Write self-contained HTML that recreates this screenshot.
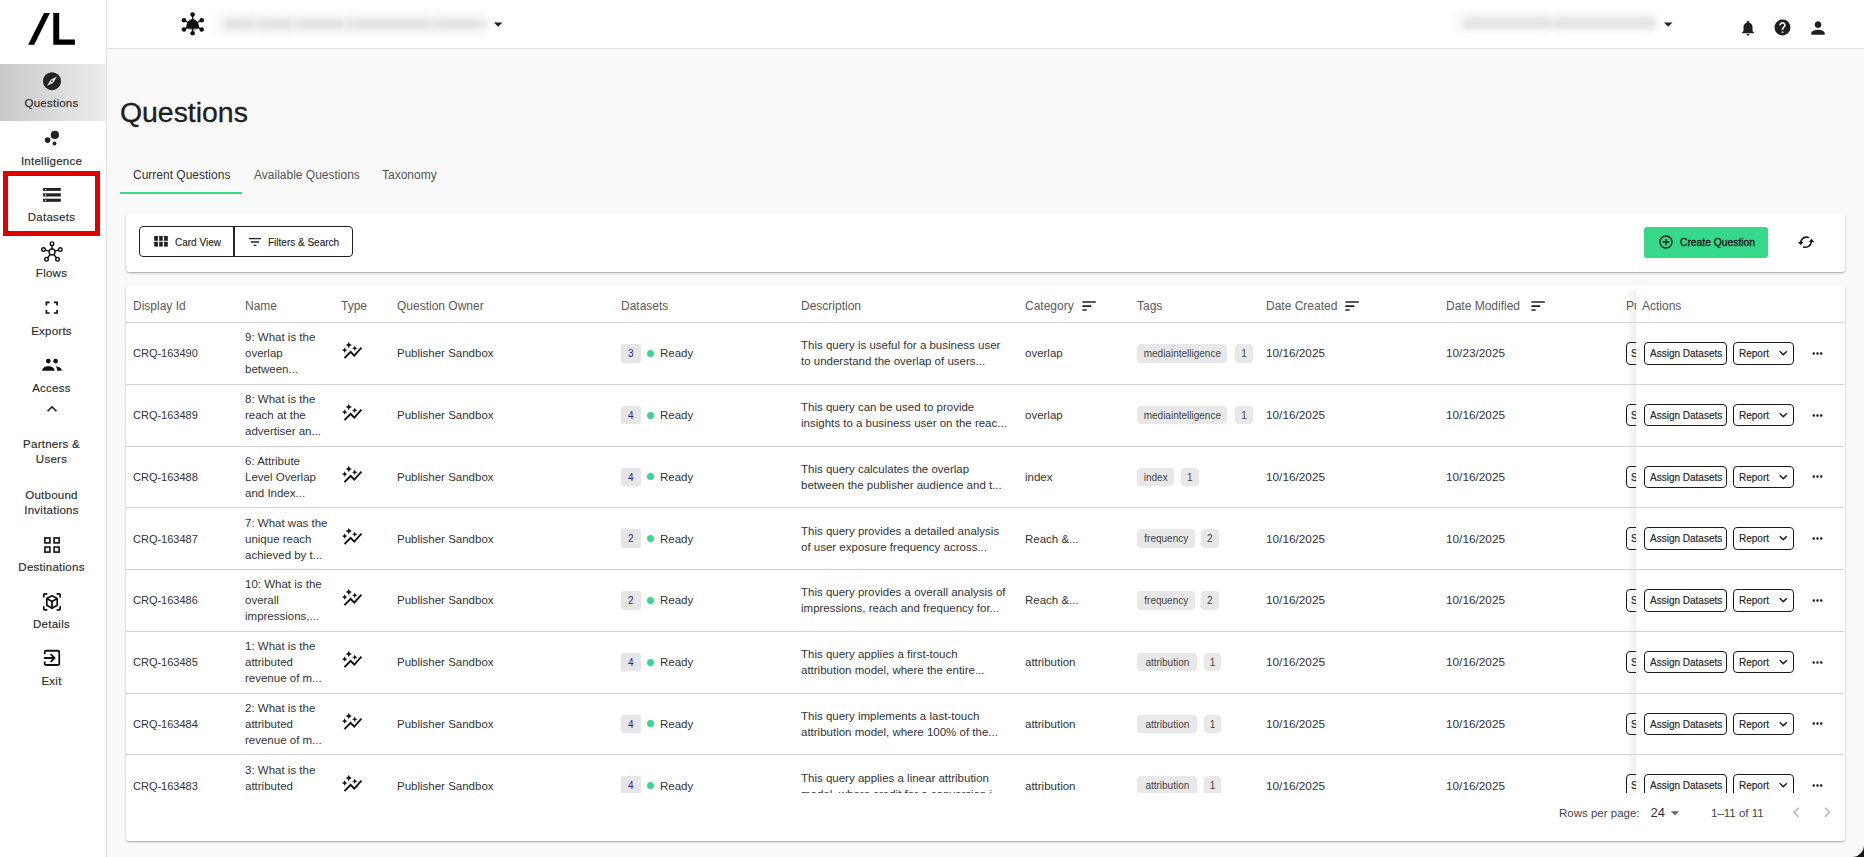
<!DOCTYPE html><html><head><meta charset="utf-8"><title>Questions</title><style>
*{box-sizing:border-box;margin:0;padding:0}
html,body{width:1864px;height:857px;overflow:hidden}
body{position:relative;background:#f9f9f9;font-family:"Liberation Sans",sans-serif;color:#222}
.abs{position:absolute}
#side{position:absolute;left:0;top:0;width:107px;height:857px;background:#fff;border-right:1px solid #e2e2e2}
.nav{position:absolute;left:0;width:103px;text-align:center;font-size:11.5px;letter-spacing:0.25px;color:#2a2a2a;line-height:15px;-webkit-text-stroke:0.15px #2a2a2a}
.nav svg{display:block;margin:0 auto}
#top{position:absolute;left:107px;top:0;width:1757px;height:49px;background:#fff;border-bottom:1px solid #dde2ea}
.t{position:absolute;white-space:nowrap}
.card{position:absolute;background:#fff;border-radius:3px}
.hdr{position:absolute;top:298px;font-size:12px;color:#5a5a5a;white-space:nowrap;line-height:16px}
.rowline{position:absolute;left:126px;width:1719px;height:1px;background:#d2d2d2}
.cell{position:absolute;white-space:nowrap;font-size:11.5px;color:#333;line-height:16px}
.badge{position:absolute;width:19.5px;height:18.5px;background:#e6e6e6;border-radius:3px;color:#2d1b99;font-size:10px;text-align:center;line-height:20px}
.dot{position:absolute;width:7px;height:7px;border-radius:50%;background:#36d98a}
.chip{position:absolute;height:18.5px;background:#e8e8e8;border-radius:4px;font-size:10px;color:#444;line-height:20.5px;padding:0 6px;white-space:nowrap}
.btn{position:absolute;height:22.5px;border:1.5px solid #1a1a1a;border-radius:4px;background:#fff;font-size:10px;color:#222;line-height:21.5px;white-space:nowrap;-webkit-text-stroke:0.15px #222}
</style></head><body>
<div id="side">
<svg class="abs" style="left:27px;top:12px" width="50" height="35" viewBox="0 0 50 35"><polygon points="1.1,32.8 7.2,32.8 22.9,0.9 17,0.9" fill="#000"/><polygon points="26.3,0.9 32.2,0.9 32.2,27.4 47.9,27.4 47.9,32.8 26.3,32.8" fill="#000"/></svg>
<div class="abs" style="left:0;top:64px;width:106px;height:56.5px;background:linear-gradient(90deg,#c9c9c9,#ececec)"></div>
<svg class="abs" style="left:36px;top:66px" width="32" height="32" viewBox="0 0 32 32"><circle cx="16" cy="15.2" r="9" fill="#222"/><path d="M21 10.4L17.4 16.7 11 20 14.6 13.7z" fill="#ddd"/><circle cx="16" cy="15.2" r="0.9" fill="#444"/></svg>
<div class="nav" style="top:96.4px;line-height:15.7px">Questions</div>
<svg class="abs" style="left:36px;top:122px" width="32" height="32" viewBox="0 0 32 32"><circle cx="18.86" cy="12.9" r="4.1" fill="#222"/><circle cx="11.6" cy="18.1" r="2.8" fill="#222"/><circle cx="18.5" cy="21.5" r="1.9" fill="#222"/></svg>
<div class="nav" style="top:153.6px;line-height:15.7px">Intelligence</div>
<svg class="abs" style="left:36px;top:180px" width="32" height="32" viewBox="0 0 32 32"><g fill="#222"><rect x="7.1" y="8" width="17.7" height="2.9"/><rect x="7.1" y="13.3" width="17.7" height="3.2"/><rect x="7.1" y="18.7" width="17.7" height="3.1"/></g><g fill="#fff"><rect x="9" y="9" width="1.2" height="1"/><rect x="9" y="14.3" width="1.2" height="1.3"/><rect x="9" y="19.7" width="1.2" height="1.1"/></g></svg>
<div class="nav" style="top:210.3px;line-height:15.7px">Datasets</div>
<svg class="abs" style="left:36px;top:236px" width="32" height="32" viewBox="0 0 32 32"><g fill="none" stroke="#111" stroke-width="1.4"><circle cx="16.06" cy="16.06" r="3"/><circle cx="16" cy="7.65" r="1.8"/><circle cx="7.5" cy="13.6" r="1.8"/><circle cx="24.3" cy="13.6" r="1.8"/><circle cx="10.5" cy="23.3" r="1.8"/><circle cx="21.5" cy="23.3" r="1.8"/><path d="M16 9.45V13.06M9.2 14.1L13.2 15.2M22.6 14.1L18.9 15.2M11.5 21.8L14.3 18.5M20.5 21.8L17.8 18.5"/></g></svg>
<div class="nav" style="top:266.3px;line-height:15.7px">Flows</div>
<svg class="abs" style="left:36px;top:292px" width="32" height="32" viewBox="0 0 32 32"><g fill="none" stroke="#111" stroke-width="1.7"><path d="M10.4 13.6V10.4H13.6M18 10.4H21.1V13.6M21.1 18V21H18M13.6 21H10.4V18"/></g></svg>
<div class="nav" style="top:324.0px;line-height:15.7px">Exports</div>
<svg class="abs" style="left:36px;top:349px" width="32" height="32" viewBox="0 0 32 32"><g fill="#111"><circle cx="12.3" cy="12.1" r="2.4"/><circle cx="19.6" cy="12.1" r="2.4"/><path d="M6.2 21.7C6.2 18.6 9.5 17.3 12.4 17.3S18.6 18.6 18.6 21.7z"/><path d="M19.6 17.3C22.5 17.6 25.8 18.8 25.8 21.7H21.2C21.2 19.6 20.5 18.3 19.6 17.3z"/></g></svg>
<div class="nav" style="top:380.5px;line-height:15.7px">Access</div>
<svg class="abs" style="left:42px;top:399px" width="20" height="20" viewBox="0 0 24 24"><path fill="#222" d="M12 8l-6 6 1.41 1.41L12 10.83l4.59 4.58L18 14z"/></svg>
<div class="nav" style="top:436.7px;line-height:15.2px">Partners &amp;<br>Users</div>
<div class="nav" style="top:487.7px;line-height:15.2px">Outbound<br>Invitations</div>
<svg class="abs" style="left:36px;top:529px" width="32" height="32" viewBox="0 0 32 32"><g fill="none" stroke="#111" stroke-width="1.6"><rect x="8.9" y="8.9" width="5" height="5"/><rect x="18.1" y="8.9" width="5" height="5"/><rect x="8.9" y="18.1" width="5" height="5"/><rect x="18.1" y="18.1" width="5" height="5"/></g></svg>
<div class="nav" style="top:559.6px;line-height:15.7px">Destinations</div>
<svg class="abs" style="left:36px;top:586px" width="32" height="32" viewBox="0 0 32 32"><g fill="none" stroke="#111" stroke-width="1.75" stroke-linejoin="round"><path d="M7.8 11.5V8.6A.8.8 0 0 1 8.6 7.8H11.3M20.6 7.8H23.3A.8.8 0 0 1 24.1 8.6V11.5M24.1 20.3V23.1A.8.8 0 0 1 23.3 23.9H20.6M11.3 23.9H8.6A.8.8 0 0 1 7.8 23.1V20.3"/><path d="M16 9.8L21.2 12.5V19.3L16 22.2L10.8 19.3V12.5Z"/><path d="M10.8 12.5L16 15.4L21.2 12.5M16 15.4V22.2"/></g></svg>
<div class="nav" style="top:616.7px;line-height:15.7px">Details</div>
<svg class="abs" style="left:36px;top:642px" width="32" height="32" viewBox="0 0 32 32"><g fill="none" stroke="#111" stroke-width="1.8"><path d="M8.75 12.3V10A1.3 1.3 0 0 1 10 8.75H22A1.3 1.3 0 0 1 23.25 10V21.7A1.3 1.3 0 0 1 22 23H10A1.3 1.3 0 0 1 8.75 21.7V19.6"/><path d="M8 16H18.6M14.6 12.2L18.6 16L14.6 19.8"/></g></svg>
<div class="nav" style="top:674.3px;line-height:15.7px">Exit</div>
<div class="abs" style="left:3px;top:171px;width:97px;height:65px;border:5px solid #e00000"></div>
</div>
<div id="top"></div>
<svg class="abs" style="left:170px;top:5px" width="40" height="40" viewBox="0 0 40 40"><g fill="#111"><path d="M16.1 23.6C16.1 17.5 19.2 14 22.6 14S29.2 17.5 29.2 23.6Z"/><circle cx="22.6" cy="9.6" r="2.3"/><circle cx="14" cy="15.2" r="2.3"/><circle cx="31.7" cy="15.2" r="2.3"/><circle cx="14" cy="24.5" r="2.3"/><circle cx="31.7" cy="24.5" r="2.3"/><circle cx="22.6" cy="28.2" r="2.3"/></g><g stroke="#111" stroke-width="1.3"><path d="M22.6 10V16M14 15.2L19 18M31.7 15.2L26.5 18M14 24.5L18 22M31.7 24.5L27.5 22M22.6 28V22"/></g><path d="M16.1 23.6Q22.6 25.5 29.2 23.6Z" fill="#111"/></svg>
<div class="abs" style="left:211px;top:9px;width:277px;height:28px;background:#fdfdfd"></div>
<div class="abs" style="left:222px;top:19px;width:36px;height:10px;background:#dcdcdc;filter:blur(4.5px);border-radius:4px"></div>
<div class="abs" style="left:257px;top:19px;width:37px;height:10px;background:#dcdcdc;filter:blur(4.5px);border-radius:4px"></div>
<div class="abs" style="left:293px;top:19px;width:54px;height:10px;background:#dcdcdc;filter:blur(4.5px);border-radius:4px"></div>
<div class="abs" style="left:347px;top:19px;width:85px;height:10px;background:#dcdcdc;filter:blur(4.5px);border-radius:4px"></div>
<div class="abs" style="left:431px;top:19px;width:55px;height:10px;background:#dcdcdc;filter:blur(4.5px);border-radius:4px"></div>
<svg class="abs" style="left:488px;top:14px" width="20.4" height="20.4" viewBox="0 0 24 24"><path fill="#222" d="M7 10l5 5 5-5z"/></svg>
<div class="abs" style="left:1452px;top:11px;width:204px;height:21px;background:#fdfdfd"></div>
<div class="abs" style="left:1462px;top:18px;width:90px;height:10px;background:#dcdcdc;filter:blur(4.5px);border-radius:4px"></div>
<div class="abs" style="left:1552px;top:18px;width:104px;height:10px;background:#dcdcdc;filter:blur(4.5px);border-radius:4px"></div>
<svg class="abs" style="left:1657.5px;top:13.5px" width="20.4" height="20.4" viewBox="0 0 24 24"><path fill="#222" d="M7 10l5 5 5-5z"/></svg>
<svg class="abs" style="left:1738.5px;top:18.5px" width="18" height="18" viewBox="0 0 24 24"><path fill="#1f1f1f" d="M12 22c1.1 0 2-.9 2-2h-4c0 1.1.89 2 2 2zm6-6v-5c0-3.07-1.64-5.64-4.5-6.32V4c0-.83-.67-1.5-1.5-1.5s-1.5.67-1.5 1.5v.68C7.63 5.36 6 7.92 6 11v5l-2 2v1h16v-1l-2-2z"/></svg>
<svg class="abs" style="left:1773.1px;top:18.1px" width="19" height="19" viewBox="0 0 24 24"><path fill="#1f1f1f" d="M12 2C6.48 2 2 6.48 2 12s4.48 10 10 10 10-4.48 10-10S17.52 2 12 2zm1 17h-2v-2h2v2zm2.07-7.75l-.9.92C13.45 12.9 13 13.5 13 15h-2v-.5c0-1.1.45-2.1 1.17-2.83l1.24-1.26c.37-.36.59-.86.59-1.41 0-1.1-.9-2-2-2s-2 .9-2 2H8c0-2.21 1.79-4 4-4s4 1.79 4 4c0 .88-.36 1.68-.93 2.25z"/></svg>
<svg class="abs" style="left:1807.5px;top:17.5px" width="20" height="20" viewBox="0 0 24 24"><path fill="#1f1f1f" d="M12 12c2.21 0 4-1.79 4-4s-1.79-4-4-4-4 1.79-4 4 1.79 4 4 4zm0 2c-2.67 0-8 1.34-8 4v2h16v-2c0-2.66-5.33-4-8-4z"/></svg>
<div class="t" style="left:120px;top:94.5px;font-size:28.4px;line-height:34px;color:#1e1e1e;-webkit-text-stroke:0.35px #1e1e1e">Questions</div>
<div class="t" style="left:133px;top:168px;font-size:12px;line-height:15px;color:#333">Current Questions</div>
<div class="t" style="left:254px;top:168px;font-size:12px;line-height:15px;color:#555">Available Questions</div>
<div class="t" style="left:382px;top:168px;font-size:12px;line-height:15px;color:#555">Taxonomy</div>
<div class="abs" style="left:120px;top:192px;width:122px;height:2px;background:#36d98a"></div>
<div class="card" style="left:126px;top:213px;width:1719px;height:59px;box-shadow:0 1px 2px rgba(0,0,0,.35)"></div>
<div class="abs" style="left:139px;top:226px;width:214px;height:31px;border:1.5px solid #222;border-radius:4px"></div>
<div class="abs" style="left:233px;top:226px;width:1.5px;height:31px;background:#222"></div>
<svg class="abs" style="left:145px;top:228px" width="28" height="28" viewBox="0 0 28 28"><g fill="#1f1f1f"><rect x="9.2" y="8" width="3.7" height="4.8"/><rect x="14.2" y="8" width="3.5" height="4.8"/><rect x="19.1" y="8" width="3.7" height="4.8"/><rect x="9.2" y="13.8" width="3.7" height="4.8"/><rect x="14.2" y="13.8" width="3.5" height="4.8"/><rect x="19.1" y="13.8" width="3.7" height="4.8"/></g></svg>
<div class="t" style="left:175px;top:235.5px;font-size:10px;line-height:13px;color:#222;-webkit-text-stroke:0.12px #222">Card View</div>
<svg class="abs" style="left:247px;top:234px" width="16" height="16" viewBox="0 0 24 24"><path fill="#222" d="M10 18h4v-2h-4v2zM3 6v2h18V6H3zm3 7h12v-2H6v2z"/></svg>
<div class="t" style="left:268px;top:235.5px;font-size:10px;line-height:13px;color:#222;-webkit-text-stroke:0.12px #222">Filters &amp; Search</div>
<div class="abs" style="left:1644px;top:227px;width:124px;height:31px;background:#36d98a;border-radius:3px"></div>
<svg class="abs" style="left:1658px;top:234px" width="16" height="16" viewBox="0 0 24 24"><path fill="#1a1a1a" d="M13 7h-2v4H7v2h4v4h2v-4h4v-2h-4V7zm-1-5C6.48 2 2 6.48 2 12s4.48 10 10 10 10-4.48 10-10S17.52 2 12 2zm0 18c-4.41 0-8-3.59-8-8s3.59-8 8-8 8 3.59 8 8-3.59 8-8 8z"/></svg>
<div class="t" style="left:1680px;top:236px;font-size:10.3px;line-height:13px;color:#1a1a1a;-webkit-text-stroke:0.35px #1a1a1a">Create Question</div>
<svg class="abs" style="left:1792px;top:228px" width="28" height="28" viewBox="0 0 28 28"><g fill="none" stroke="#1a1a1a" stroke-width="1.7" stroke-linecap="round"><path d="M16.2 9.3Q10.2 8.3 8.7 14.3"/><path d="M11.8 19.1Q17.8 20.1 19.4 13.9"/></g><g fill="#1a1a1a"><path d="M6 14.1H11.4L8.7 17.2Z"/><path d="M16.8 13.9H22.2L19.5 10.8Z"/></g></svg>
<div class="card" style="left:126px;top:285px;width:1719px;height:556px;box-shadow:0 1px 2px rgba(0,0,0,.35)"></div>
<div class="hdr" style="left:133px">Display Id</div>
<div class="hdr" style="left:245px">Name</div>
<div class="hdr" style="left:341px">Type</div>
<div class="hdr" style="left:397px">Question Owner</div>
<div class="hdr" style="left:621px">Datasets</div>
<div class="hdr" style="left:801px">Description</div>
<div class="hdr" style="left:1025px">Category</div>
<div class="hdr" style="left:1137px">Tags</div>
<div class="hdr" style="left:1266px">Date Created</div>
<div class="hdr" style="left:1446px">Date Modified</div>
<div class="hdr" style="left:1626px">Publish</div>
<div class="abs" style="left:1076px;top:294px;width:24px;height:24px"><svg width="24" height="24" viewBox="0 0 24 24"><g stroke="#222" stroke-width="1.7" stroke-linecap="round"><path d="M7.1 8H19.1M7.1 12.2H14.6M7.1 16H10"/></g></svg></div>
<div class="abs" style="left:1339px;top:294px;width:24px;height:24px"><svg width="24" height="24" viewBox="0 0 24 24"><g stroke="#222" stroke-width="1.7" stroke-linecap="round"><path d="M7.1 8H19.1M7.1 12.2H14.6M7.1 16H10"/></g></svg></div>
<div class="abs" style="left:1525px;top:294px;width:24px;height:24px"><svg width="24" height="24" viewBox="0 0 24 24"><g stroke="#222" stroke-width="1.7" stroke-linecap="round"><path d="M7.1 8H19.1M7.1 12.2H14.6M7.1 16H10"/></g></svg></div>
<div class="rowline" style="top:322px"></div>
<div class="abs" style="left:126px;top:323px;width:1718px;height:470px;overflow:hidden">
<div class="cell" style="left:7px;top:22.4px;font-size:11px">CRQ-163490</div>
<div class="cell" style="left:119px;top:6.4px">9: What is the<br>overlap<br>between...</div>
<div class="abs" style="left:215px;top:17.4px"><svg width="22" height="22" viewBox="0 0 24 24"><path fill="#111" d="M14.06 9.94L12 9l2.06-.94L15 6l.94 2.06L18 9l-2.06.94L15 12l-.94-2.06zM4 14l.94-2.06L7 11l-2.06-.94L4 8l-.94 2.06L1 11l2.06.94L4 14zm4.5-5l1.09-2.41L12 5.5 9.59 4.41 8.5 2 7.41 4.41 5 5.5l2.41 1.09L8.5 9zm-4 11.5l6-6.01 4 4L23 8.93l-1.41-1.41-7.09 7.97-4-4L3 19l1.5 1.5z"/></svg></div>
<div class="cell" style="left:271px;top:22.4px">Publisher Sandbox</div>
<div class="badge" style="left:495px;top:21.15px">3</div>
<div class="dot" style="left:521px;top:26.9px"></div>
<div class="cell" style="left:534px;top:22.4px">Ready</div>
<div class="cell" style="left:675px;top:14.4px">This query is useful for a business user<br>to understand the overlap of users...</div>
<div class="cell" style="left:899px;top:22.4px">overlap</div>
<div class="chip" style="left:1011.2px;top:21.15px;width:90.3px;padding:0;text-align:center">mediaintelligence</div>
<div class="chip" style="left:1109.2px;top:21.15px;width:17.5px;padding:0;text-align:center">1</div>
<div class="cell" style="left:1140px;top:22.4px;font-size:11.8px">10/16/2025</div>
<div class="cell" style="left:1320px;top:22.4px;font-size:11.8px">10/23/2025</div>
<div class="btn" style="left:1500px;top:19.15px;width:40px;padding-left:4px">S</div>
<div class="abs" style="left:1510px;top:-0.7px;width:208px;height:61.7px;background:#fff"></div>
<div class="btn" style="left:1518px;top:19.15px;width:83px;padding-left:5px">Assign Datasets</div>
<div class="btn" style="left:1607px;top:19.15px;width:61px;padding-left:5px">Report<svg style="position:absolute;left:43.5px;top:6px" width="11" height="8" viewBox="0 0 11 8"><path d="M1.7 2.2L5.3 5.6L8.9 2.2" fill="none" stroke="#222" stroke-width="1.5"/></svg></div>
<svg class="abs" style="left:1683.5px;top:22.9px" width="15" height="15" viewBox="0 0 24 24"><path fill="#222" d="M6 10c-1.1 0-2 .9-2 2s.9 2 2 2 2-.9 2-2-.9-2-2-2zm12 0c-1.1 0-2 .9-2 2s.9 2 2 2 2-.9 2-2-.9-2-2-2zm-6 0c-1.1 0-2 .9-2 2s.9 2 2 2 2-.9 2-2-.9-2-2-2z"/></svg>
<div class="cell" style="left:7px;top:84.15px;font-size:11px">CRQ-163489</div>
<div class="cell" style="left:119px;top:68.15px">8: What is the<br>reach at the<br>advertiser an...</div>
<div class="abs" style="left:215px;top:79.15px"><svg width="22" height="22" viewBox="0 0 24 24"><path fill="#111" d="M14.06 9.94L12 9l2.06-.94L15 6l.94 2.06L18 9l-2.06.94L15 12l-.94-2.06zM4 14l.94-2.06L7 11l-2.06-.94L4 8l-.94 2.06L1 11l2.06.94L4 14zm4.5-5l1.09-2.41L12 5.5 9.59 4.41 8.5 2 7.41 4.41 5 5.5l2.41 1.09L8.5 9zm-4 11.5l6-6.01 4 4L23 8.93l-1.41-1.41-7.09 7.97-4-4L3 19l1.5 1.5z"/></svg></div>
<div class="cell" style="left:271px;top:84.15px">Publisher Sandbox</div>
<div class="badge" style="left:495px;top:82.9px">4</div>
<div class="dot" style="left:521px;top:88.65px"></div>
<div class="cell" style="left:534px;top:84.15px">Ready</div>
<div class="cell" style="left:675px;top:76.15px">This query can be used to provide<br>insights to a business user on the reac...</div>
<div class="cell" style="left:899px;top:84.15px">overlap</div>
<div class="chip" style="left:1011.2px;top:82.9px;width:90.3px;padding:0;text-align:center">mediaintelligence</div>
<div class="chip" style="left:1109.2px;top:82.9px;width:17.5px;padding:0;text-align:center">1</div>
<div class="cell" style="left:1140px;top:84.15px;font-size:11.8px">10/16/2025</div>
<div class="cell" style="left:1320px;top:84.15px;font-size:11.8px">10/16/2025</div>
<div class="btn" style="left:1500px;top:80.9px;width:40px;padding-left:4px">S</div>
<div class="abs" style="left:1510px;top:61.0px;width:208px;height:61.7px;background:#fff"></div>
<div class="btn" style="left:1518px;top:80.9px;width:83px;padding-left:5px">Assign Datasets</div>
<div class="btn" style="left:1607px;top:80.9px;width:61px;padding-left:5px">Report<svg style="position:absolute;left:43.5px;top:6px" width="11" height="8" viewBox="0 0 11 8"><path d="M1.7 2.2L5.3 5.6L8.9 2.2" fill="none" stroke="#222" stroke-width="1.5"/></svg></div>
<svg class="abs" style="left:1683.5px;top:84.65px" width="15" height="15" viewBox="0 0 24 24"><path fill="#222" d="M6 10c-1.1 0-2 .9-2 2s.9 2 2 2 2-.9 2-2-.9-2-2-2zm12 0c-1.1 0-2 .9-2 2s.9 2 2 2 2-.9 2-2-.9-2-2-2zm-6 0c-1.1 0-2 .9-2 2s.9 2 2 2 2-.9 2-2-.9-2-2-2z"/></svg>
<div class="cell" style="left:7px;top:145.9px;font-size:11px">CRQ-163488</div>
<div class="cell" style="left:119px;top:129.9px">6: Attribute<br>Level Overlap<br>and Index...</div>
<div class="abs" style="left:215px;top:140.9px"><svg width="22" height="22" viewBox="0 0 24 24"><path fill="#111" d="M14.06 9.94L12 9l2.06-.94L15 6l.94 2.06L18 9l-2.06.94L15 12l-.94-2.06zM4 14l.94-2.06L7 11l-2.06-.94L4 8l-.94 2.06L1 11l2.06.94L4 14zm4.5-5l1.09-2.41L12 5.5 9.59 4.41 8.5 2 7.41 4.41 5 5.5l2.41 1.09L8.5 9zm-4 11.5l6-6.01 4 4L23 8.93l-1.41-1.41-7.09 7.97-4-4L3 19l1.5 1.5z"/></svg></div>
<div class="cell" style="left:271px;top:145.9px">Publisher Sandbox</div>
<div class="badge" style="left:495px;top:144.65px">4</div>
<div class="dot" style="left:521px;top:150.4px"></div>
<div class="cell" style="left:534px;top:145.9px">Ready</div>
<div class="cell" style="left:675px;top:137.9px">This query calculates the overlap<br>between the publisher audience and t...</div>
<div class="cell" style="left:899px;top:145.9px">index</div>
<div class="chip" style="left:1011.2px;top:144.65px;width:37px;padding:0;text-align:center">index</div>
<div class="chip" style="left:1055px;top:144.65px;width:17.5px;padding:0;text-align:center">1</div>
<div class="cell" style="left:1140px;top:145.9px;font-size:11.8px">10/16/2025</div>
<div class="cell" style="left:1320px;top:145.9px;font-size:11.8px">10/16/2025</div>
<div class="btn" style="left:1500px;top:142.65px;width:40px;padding-left:4px">S</div>
<div class="abs" style="left:1510px;top:122.7px;width:208px;height:61.7px;background:#fff"></div>
<div class="btn" style="left:1518px;top:142.65px;width:83px;padding-left:5px">Assign Datasets</div>
<div class="btn" style="left:1607px;top:142.65px;width:61px;padding-left:5px">Report<svg style="position:absolute;left:43.5px;top:6px" width="11" height="8" viewBox="0 0 11 8"><path d="M1.7 2.2L5.3 5.6L8.9 2.2" fill="none" stroke="#222" stroke-width="1.5"/></svg></div>
<svg class="abs" style="left:1683.5px;top:146.4px" width="15" height="15" viewBox="0 0 24 24"><path fill="#222" d="M6 10c-1.1 0-2 .9-2 2s.9 2 2 2 2-.9 2-2-.9-2-2-2zm12 0c-1.1 0-2 .9-2 2s.9 2 2 2 2-.9 2-2-.9-2-2-2zm-6 0c-1.1 0-2 .9-2 2s.9 2 2 2 2-.9 2-2-.9-2-2-2z"/></svg>
<div class="cell" style="left:7px;top:207.65px;font-size:11px">CRQ-163487</div>
<div class="cell" style="left:119px;top:191.65px">7: What was the<br>unique reach<br>achieved by t...</div>
<div class="abs" style="left:215px;top:202.65px"><svg width="22" height="22" viewBox="0 0 24 24"><path fill="#111" d="M14.06 9.94L12 9l2.06-.94L15 6l.94 2.06L18 9l-2.06.94L15 12l-.94-2.06zM4 14l.94-2.06L7 11l-2.06-.94L4 8l-.94 2.06L1 11l2.06.94L4 14zm4.5-5l1.09-2.41L12 5.5 9.59 4.41 8.5 2 7.41 4.41 5 5.5l2.41 1.09L8.5 9zm-4 11.5l6-6.01 4 4L23 8.93l-1.41-1.41-7.09 7.97-4-4L3 19l1.5 1.5z"/></svg></div>
<div class="cell" style="left:271px;top:207.65px">Publisher Sandbox</div>
<div class="badge" style="left:495px;top:206.4px">2</div>
<div class="dot" style="left:521px;top:212.15px"></div>
<div class="cell" style="left:534px;top:207.65px">Ready</div>
<div class="cell" style="left:675px;top:199.65px">This query provides a detailed analysis<br>of user exposure frequency across...</div>
<div class="cell" style="left:899px;top:207.65px">Reach &...</div>
<div class="chip" style="left:1011.2px;top:206.4px;width:58.2px;padding:0;text-align:center">frequency</div>
<div class="chip" style="left:1075.1px;top:206.4px;width:17.5px;padding:0;text-align:center">2</div>
<div class="cell" style="left:1140px;top:207.65px;font-size:11.8px">10/16/2025</div>
<div class="cell" style="left:1320px;top:207.65px;font-size:11.8px">10/16/2025</div>
<div class="btn" style="left:1500px;top:204.4px;width:40px;padding-left:4px">S</div>
<div class="abs" style="left:1510px;top:184.4px;width:208px;height:61.7px;background:#fff"></div>
<div class="btn" style="left:1518px;top:204.4px;width:83px;padding-left:5px">Assign Datasets</div>
<div class="btn" style="left:1607px;top:204.4px;width:61px;padding-left:5px">Report<svg style="position:absolute;left:43.5px;top:6px" width="11" height="8" viewBox="0 0 11 8"><path d="M1.7 2.2L5.3 5.6L8.9 2.2" fill="none" stroke="#222" stroke-width="1.5"/></svg></div>
<svg class="abs" style="left:1683.5px;top:208.15px" width="15" height="15" viewBox="0 0 24 24"><path fill="#222" d="M6 10c-1.1 0-2 .9-2 2s.9 2 2 2 2-.9 2-2-.9-2-2-2zm12 0c-1.1 0-2 .9-2 2s.9 2 2 2 2-.9 2-2-.9-2-2-2zm-6 0c-1.1 0-2 .9-2 2s.9 2 2 2 2-.9 2-2-.9-2-2-2z"/></svg>
<div class="cell" style="left:7px;top:269.4px;font-size:11px">CRQ-163486</div>
<div class="cell" style="left:119px;top:253.4px">10: What is the<br>overall<br>impressions,...</div>
<div class="abs" style="left:215px;top:264.4px"><svg width="22" height="22" viewBox="0 0 24 24"><path fill="#111" d="M14.06 9.94L12 9l2.06-.94L15 6l.94 2.06L18 9l-2.06.94L15 12l-.94-2.06zM4 14l.94-2.06L7 11l-2.06-.94L4 8l-.94 2.06L1 11l2.06.94L4 14zm4.5-5l1.09-2.41L12 5.5 9.59 4.41 8.5 2 7.41 4.41 5 5.5l2.41 1.09L8.5 9zm-4 11.5l6-6.01 4 4L23 8.93l-1.41-1.41-7.09 7.97-4-4L3 19l1.5 1.5z"/></svg></div>
<div class="cell" style="left:271px;top:269.4px">Publisher Sandbox</div>
<div class="badge" style="left:495px;top:268.15px">2</div>
<div class="dot" style="left:521px;top:273.9px"></div>
<div class="cell" style="left:534px;top:269.4px">Ready</div>
<div class="cell" style="left:675px;top:261.4px">This query provides a overall analysis of<br>impressions, reach and frequency for...</div>
<div class="cell" style="left:899px;top:269.4px">Reach &...</div>
<div class="chip" style="left:1011.2px;top:268.15px;width:58.2px;padding:0;text-align:center">frequency</div>
<div class="chip" style="left:1075.1px;top:268.15px;width:17.5px;padding:0;text-align:center">2</div>
<div class="cell" style="left:1140px;top:269.4px;font-size:11.8px">10/16/2025</div>
<div class="cell" style="left:1320px;top:269.4px;font-size:11.8px">10/16/2025</div>
<div class="btn" style="left:1500px;top:266.15px;width:40px;padding-left:4px">S</div>
<div class="abs" style="left:1510px;top:246.1px;width:208px;height:61.7px;background:#fff"></div>
<div class="btn" style="left:1518px;top:266.15px;width:83px;padding-left:5px">Assign Datasets</div>
<div class="btn" style="left:1607px;top:266.15px;width:61px;padding-left:5px">Report<svg style="position:absolute;left:43.5px;top:6px" width="11" height="8" viewBox="0 0 11 8"><path d="M1.7 2.2L5.3 5.6L8.9 2.2" fill="none" stroke="#222" stroke-width="1.5"/></svg></div>
<svg class="abs" style="left:1683.5px;top:269.9px" width="15" height="15" viewBox="0 0 24 24"><path fill="#222" d="M6 10c-1.1 0-2 .9-2 2s.9 2 2 2 2-.9 2-2-.9-2-2-2zm12 0c-1.1 0-2 .9-2 2s.9 2 2 2 2-.9 2-2-.9-2-2-2zm-6 0c-1.1 0-2 .9-2 2s.9 2 2 2 2-.9 2-2-.9-2-2-2z"/></svg>
<div class="cell" style="left:7px;top:331.15px;font-size:11px">CRQ-163485</div>
<div class="cell" style="left:119px;top:315.15px">1: What is the<br>attributed<br>revenue of m...</div>
<div class="abs" style="left:215px;top:326.15px"><svg width="22" height="22" viewBox="0 0 24 24"><path fill="#111" d="M14.06 9.94L12 9l2.06-.94L15 6l.94 2.06L18 9l-2.06.94L15 12l-.94-2.06zM4 14l.94-2.06L7 11l-2.06-.94L4 8l-.94 2.06L1 11l2.06.94L4 14zm4.5-5l1.09-2.41L12 5.5 9.59 4.41 8.5 2 7.41 4.41 5 5.5l2.41 1.09L8.5 9zm-4 11.5l6-6.01 4 4L23 8.93l-1.41-1.41-7.09 7.97-4-4L3 19l1.5 1.5z"/></svg></div>
<div class="cell" style="left:271px;top:331.15px">Publisher Sandbox</div>
<div class="badge" style="left:495px;top:329.9px">4</div>
<div class="dot" style="left:521px;top:335.65px"></div>
<div class="cell" style="left:534px;top:331.15px">Ready</div>
<div class="cell" style="left:675px;top:323.15px">This query applies a first-touch<br>attribution model, where the entire...</div>
<div class="cell" style="left:899px;top:331.15px">attribution</div>
<div class="chip" style="left:1011.2px;top:329.9px;width:60.3px;padding:0;text-align:center">attribution</div>
<div class="chip" style="left:1077.8px;top:329.9px;width:17.5px;padding:0;text-align:center">1</div>
<div class="cell" style="left:1140px;top:331.15px;font-size:11.8px">10/16/2025</div>
<div class="cell" style="left:1320px;top:331.15px;font-size:11.8px">10/16/2025</div>
<div class="btn" style="left:1500px;top:327.9px;width:40px;padding-left:4px">S</div>
<div class="abs" style="left:1510px;top:307.8px;width:208px;height:61.7px;background:#fff"></div>
<div class="btn" style="left:1518px;top:327.9px;width:83px;padding-left:5px">Assign Datasets</div>
<div class="btn" style="left:1607px;top:327.9px;width:61px;padding-left:5px">Report<svg style="position:absolute;left:43.5px;top:6px" width="11" height="8" viewBox="0 0 11 8"><path d="M1.7 2.2L5.3 5.6L8.9 2.2" fill="none" stroke="#222" stroke-width="1.5"/></svg></div>
<svg class="abs" style="left:1683.5px;top:331.65px" width="15" height="15" viewBox="0 0 24 24"><path fill="#222" d="M6 10c-1.1 0-2 .9-2 2s.9 2 2 2 2-.9 2-2-.9-2-2-2zm12 0c-1.1 0-2 .9-2 2s.9 2 2 2 2-.9 2-2-.9-2-2-2zm-6 0c-1.1 0-2 .9-2 2s.9 2 2 2 2-.9 2-2-.9-2-2-2z"/></svg>
<div class="cell" style="left:7px;top:392.9px;font-size:11px">CRQ-163484</div>
<div class="cell" style="left:119px;top:376.9px">2: What is the<br>attributed<br>revenue of m...</div>
<div class="abs" style="left:215px;top:387.9px"><svg width="22" height="22" viewBox="0 0 24 24"><path fill="#111" d="M14.06 9.94L12 9l2.06-.94L15 6l.94 2.06L18 9l-2.06.94L15 12l-.94-2.06zM4 14l.94-2.06L7 11l-2.06-.94L4 8l-.94 2.06L1 11l2.06.94L4 14zm4.5-5l1.09-2.41L12 5.5 9.59 4.41 8.5 2 7.41 4.41 5 5.5l2.41 1.09L8.5 9zm-4 11.5l6-6.01 4 4L23 8.93l-1.41-1.41-7.09 7.97-4-4L3 19l1.5 1.5z"/></svg></div>
<div class="cell" style="left:271px;top:392.9px">Publisher Sandbox</div>
<div class="badge" style="left:495px;top:391.65px">4</div>
<div class="dot" style="left:521px;top:397.4px"></div>
<div class="cell" style="left:534px;top:392.9px">Ready</div>
<div class="cell" style="left:675px;top:384.9px">This query implements a last-touch<br>attribution model, where 100% of the...</div>
<div class="cell" style="left:899px;top:392.9px">attribution</div>
<div class="chip" style="left:1011.2px;top:391.65px;width:60.3px;padding:0;text-align:center">attribution</div>
<div class="chip" style="left:1077.8px;top:391.65px;width:17.5px;padding:0;text-align:center">1</div>
<div class="cell" style="left:1140px;top:392.9px;font-size:11.8px">10/16/2025</div>
<div class="cell" style="left:1320px;top:392.9px;font-size:11.8px">10/16/2025</div>
<div class="btn" style="left:1500px;top:389.65px;width:40px;padding-left:4px">S</div>
<div class="abs" style="left:1510px;top:369.5px;width:208px;height:61.7px;background:#fff"></div>
<div class="btn" style="left:1518px;top:389.65px;width:83px;padding-left:5px">Assign Datasets</div>
<div class="btn" style="left:1607px;top:389.65px;width:61px;padding-left:5px">Report<svg style="position:absolute;left:43.5px;top:6px" width="11" height="8" viewBox="0 0 11 8"><path d="M1.7 2.2L5.3 5.6L8.9 2.2" fill="none" stroke="#222" stroke-width="1.5"/></svg></div>
<svg class="abs" style="left:1683.5px;top:393.4px" width="15" height="15" viewBox="0 0 24 24"><path fill="#222" d="M6 10c-1.1 0-2 .9-2 2s.9 2 2 2 2-.9 2-2-.9-2-2-2zm12 0c-1.1 0-2 .9-2 2s.9 2 2 2 2-.9 2-2-.9-2-2-2zm-6 0c-1.1 0-2 .9-2 2s.9 2 2 2 2-.9 2-2-.9-2-2-2z"/></svg>
<div class="cell" style="left:7px;top:454.65px;font-size:11px">CRQ-163483</div>
<div class="cell" style="left:119px;top:438.65px">3: What is the<br>attributed<br>revenue of m...</div>
<div class="abs" style="left:215px;top:449.65px"><svg width="22" height="22" viewBox="0 0 24 24"><path fill="#111" d="M14.06 9.94L12 9l2.06-.94L15 6l.94 2.06L18 9l-2.06.94L15 12l-.94-2.06zM4 14l.94-2.06L7 11l-2.06-.94L4 8l-.94 2.06L1 11l2.06.94L4 14zm4.5-5l1.09-2.41L12 5.5 9.59 4.41 8.5 2 7.41 4.41 5 5.5l2.41 1.09L8.5 9zm-4 11.5l6-6.01 4 4L23 8.93l-1.41-1.41-7.09 7.97-4-4L3 19l1.5 1.5z"/></svg></div>
<div class="cell" style="left:271px;top:454.65px">Publisher Sandbox</div>
<div class="badge" style="left:495px;top:453.4px">4</div>
<div class="dot" style="left:521px;top:459.15px"></div>
<div class="cell" style="left:534px;top:454.65px">Ready</div>
<div class="cell" style="left:675px;top:446.65px">This query applies a linear attribution<br>model, where credit for a conversion i...</div>
<div class="cell" style="left:899px;top:454.65px">attribution</div>
<div class="chip" style="left:1011.2px;top:453.4px;width:60.3px;padding:0;text-align:center">attribution</div>
<div class="chip" style="left:1077.8px;top:453.4px;width:17.5px;padding:0;text-align:center">1</div>
<div class="cell" style="left:1140px;top:454.65px;font-size:11.8px">10/16/2025</div>
<div class="cell" style="left:1320px;top:454.65px;font-size:11.8px">10/16/2025</div>
<div class="btn" style="left:1500px;top:451.4px;width:40px;padding-left:4px">S</div>
<div class="abs" style="left:1510px;top:431.2px;width:208px;height:61.7px;background:#fff"></div>
<div class="btn" style="left:1518px;top:451.4px;width:83px;padding-left:5px">Assign Datasets</div>
<div class="btn" style="left:1607px;top:451.4px;width:61px;padding-left:5px">Report<svg style="position:absolute;left:43.5px;top:6px" width="11" height="8" viewBox="0 0 11 8"><path d="M1.7 2.2L5.3 5.6L8.9 2.2" fill="none" stroke="#222" stroke-width="1.5"/></svg></div>
<svg class="abs" style="left:1683.5px;top:455.15px" width="15" height="15" viewBox="0 0 24 24"><path fill="#222" d="M6 10c-1.1 0-2 .9-2 2s.9 2 2 2 2-.9 2-2-.9-2-2-2zm12 0c-1.1 0-2 .9-2 2s.9 2 2 2 2-.9 2-2-.9-2-2-2zm-6 0c-1.1 0-2 .9-2 2s.9 2 2 2 2-.9 2-2-.9-2-2-2z"/></svg>
<div class="abs" style="left:1500px;top:0;width:10px;height:470px;background:linear-gradient(90deg,rgba(0,0,0,0),rgba(0,0,0,.065))"></div>
<div class="abs" style="left:0;top:61.0px;width:1719px;height:1px;background:#d2d2d2"></div>
<div class="abs" style="left:0;top:122.7px;width:1719px;height:1px;background:#d2d2d2"></div>
<div class="abs" style="left:0;top:184.4px;width:1719px;height:1px;background:#d2d2d2"></div>
<div class="abs" style="left:0;top:246.1px;width:1719px;height:1px;background:#d2d2d2"></div>
<div class="abs" style="left:0;top:307.8px;width:1719px;height:1px;background:#d2d2d2"></div>
<div class="abs" style="left:0;top:369.5px;width:1719px;height:1px;background:#d2d2d2"></div>
<div class="abs" style="left:0;top:431.2px;width:1719px;height:1px;background:#d2d2d2"></div>
<div class="abs" style="left:0;top:492.9px;width:1719px;height:1px;background:#d2d2d2"></div>
</div>
<div class="abs" style="left:1636px;top:286px;width:207px;height:36px;background:#fff"></div>
<div class="abs" style="left:1626px;top:291px;width:10px;height:31px;background:linear-gradient(90deg,rgba(0,0,0,0),rgba(0,0,0,.065))"></div>
<div class="hdr" style="left:1642px">Actions</div>
<div class="t" style="left:1559px;top:806px;font-size:11.5px;line-height:15px;color:#444">Rows per page:</div>
<div class="t" style="left:1650.5px;top:805px;font-size:13px;line-height:16px;color:#333">24</div>
<svg class="abs" style="left:1664.6px;top:802.7px" width="20" height="20" viewBox="0 0 24 24"><path fill="#666" d="M7 10l5 5 5-5z"/></svg>
<div class="t" style="left:1711px;top:806px;font-size:11.5px;line-height:15px;color:#444">1–11 of 11</div>
<svg class="abs" style="left:1785.7px;top:802.15px" width="20.6" height="20.6" viewBox="0 0 24 24"><path fill="#bbb" d="M15.41 7.41L14 6l-6 6 6 6 1.41-1.41L10.83 12z"/></svg>
<svg class="abs" style="left:1816.5px;top:802.15px" width="20.6" height="20.6" viewBox="0 0 24 24"><path fill="#bbb" d="M10 6L8.59 7.41 13.17 12l-4.58 4.59L10 18l6-6z"/></svg>
<svg class="abs" style="left:1852px;top:845px" width="12" height="12" viewBox="0 0 12 12"><path d="M12 0V12H0A12 12 0 0 0 12 0z" fill="#1b1313"/></svg>
</body></html>
